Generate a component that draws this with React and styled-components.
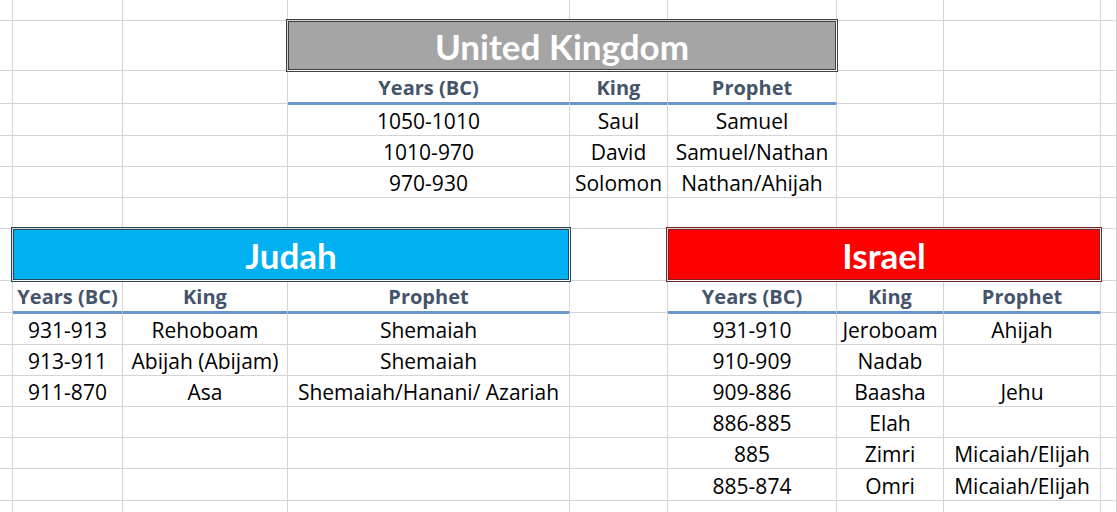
import React from "react";
import styled, { createGlobalStyle } from "styled-components";

const GlobalStyle = createGlobalStyle`
  html, body {
    margin: 0;
    padding: 0;
    background: #ffffff;
    overflow: hidden;
  }
  body {
    font-family: "Open Sans", "Noto Sans", "Liberation Sans", sans-serif;
  }
`;

const COLS = [13, 110, 165, 282, 98, 169, 107, 157];
const ROWS = [21, 50, 33, 32, 31, 31, 31, 52, 32, 32, 31, 31, 31, 31, 32, 40];

const tones = {
  gray: { fill: "#a5a5a5", line: "#3f3f3f" },
  blue: { fill: "#00b0f0", line: "#24495a" },
  red: { fill: "#ff0000", line: "#7a2424" },
};

const Sheet = styled.div`
  display: grid;
  grid-template-columns: ${COLS.map((c) => c + "px").join(" ")} 1fr;
  grid-template-rows: ${ROWS.map((r) => r + "px").join(" ")};
  width: 1117px;
  height: 512px;
  overflow: hidden;
`;

const Cell = styled.div`
  box-sizing: border-box;
  display: flex;
  align-items: flex-end;
  justify-content: center;
  padding-bottom: 2px;
  border-right: 1px solid #d4d4d4;
  border-bottom: 1px solid #d4d4d4;
  font-size: 21px;
  line-height: 24px;
  color: #000000;
  white-space: nowrap;
  min-width: 0;
`;

const HeadCell = styled(Cell)`
  font-size: 20px;
  font-weight: 700;
  color: #44546a;
  border-bottom: 3px solid #6896cc;
  margin-bottom: -1px;
  padding-bottom: 2px;
`;

const TitleCell = styled.div`
  box-sizing: border-box;
  grid-column: span ${(p) => p.$span};
  margin: -2px -1px -1px -2px;
  display: flex;
  align-items: center;
  justify-content: center;
  background: ${(p) => tones[p.$tone].fill};
  background-clip: padding-box;
  border: 3px double ${(p) => tones[p.$tone].line};
  color: #ffffff;
  font-family: Lato, "Open Sans", sans-serif;
  font-size: 35px;
  font-weight: 700;
  line-height: 42px;
  white-space: nowrap;
  position: relative;
  z-index: 1;
`;

const head = ["Years (BC)", "King", "Prophet"];

// content by row: { col: value } ; title cells carry span + tone
const sheetData = {
  1: { 3: { title: "United Kingdom", span: 3, tone: "gray" } },
  2: { 3: { head: head[0] }, 4: { head: head[1] }, 5: { head: head[2] } },
  3: { 3: "1050-1010", 4: "Saul", 5: "Samuel" },
  4: { 3: "1010-970", 4: "David", 5: "Samuel/Nathan" },
  5: { 3: "970-930", 4: "Solomon", 5: "Nathan/Ahijah" },
  7: {
    1: { title: "Judah", span: 3, tone: "blue" },
    5: { title: "Israel", span: 3, tone: "red" },
  },
  8: {
    1: { head: head[0] }, 2: { head: head[1] }, 3: { head: head[2] },
    5: { head: head[0] }, 6: { head: head[1] }, 7: { head: head[2] },
  },
  9: { 1: "931-913", 2: "Rehoboam", 3: "Shemaiah", 5: "931-910", 6: "Jeroboam", 7: "Ahijah" },
  10: { 1: "913-911", 2: "Abijah (Abijam)", 3: "Shemaiah", 5: "910-909", 6: "Nadab" },
  11: { 1: "911-870", 2: "Asa", 3: "Shemaiah/Hanani/ Azariah", 5: "909-886", 6: "Baasha", 7: "Jehu" },
  12: { 5: "886-885", 6: "Elah" },
  13: { 5: "885", 6: "Zimri", 7: "Micaiah/Elijah" },
  14: { 5: "885-874", 6: "Omri", 7: "Micaiah/Elijah" },
};

function renderRow(r) {
  const data = sheetData[r] || {};
  const out = [];
  let c = 0;
  while (c < COLS.length + 1) {
    const v = data[c];
    const key = `${r}-${c}`;
    if (v && v.title) {
      out.push(
        <TitleCell key={key} $span={v.span} $tone={v.tone}>
          {v.title}
        </TitleCell>
      );
      c += v.span;
      continue;
    }
    if (v && v.head) {
      out.push(<HeadCell key={key}>{v.head}</HeadCell>);
    } else {
      out.push(<Cell key={key}>{v || ""}</Cell>);
    }
    c += 1;
  }
  return out;
}

export default function App() {
  return (
    <>
      <GlobalStyle />
      <Sheet>{ROWS.map((_, r) => renderRow(r))}</Sheet>
    </>
  );
}
